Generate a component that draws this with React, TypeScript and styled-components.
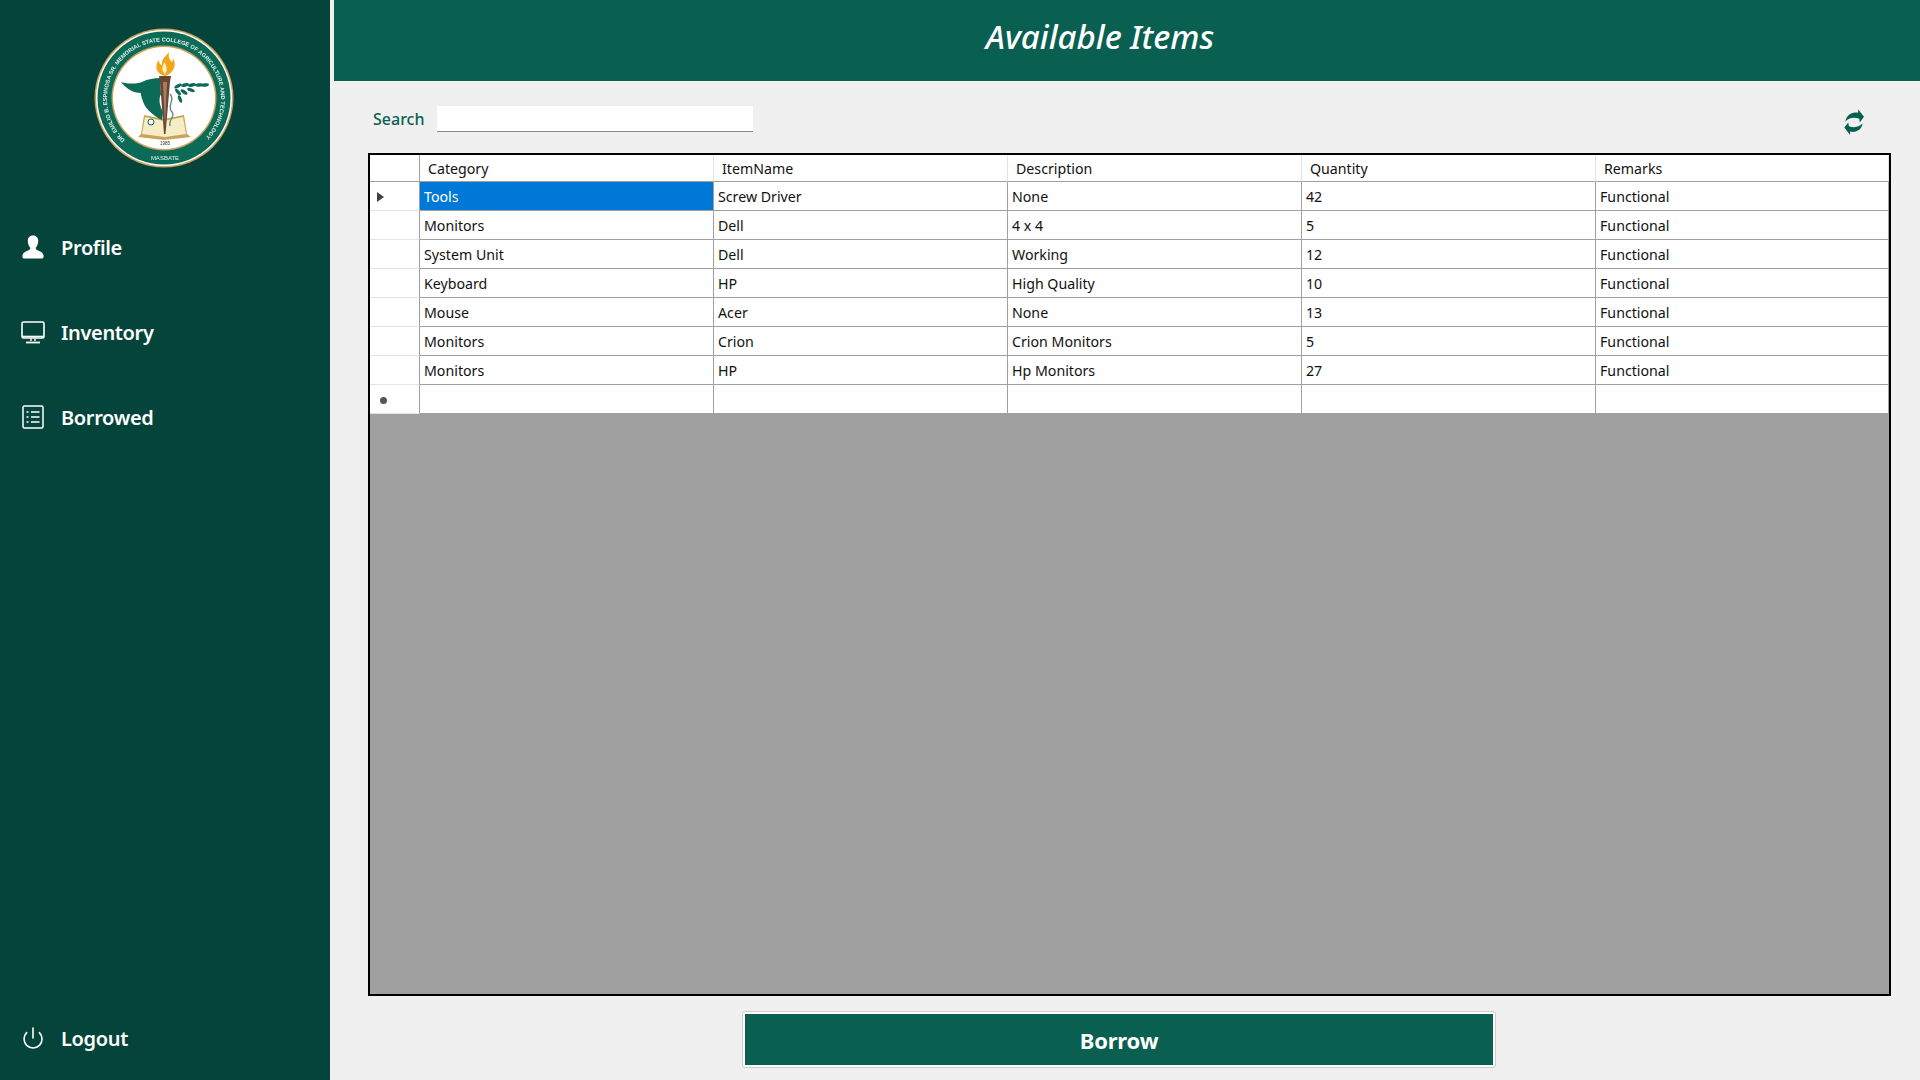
import { FC } from "react";
import styled, { createGlobalStyle } from "styled-components";
import { Power } from "lucide-react";

const GlobalStyle = createGlobalStyle`
html, body {
    margin: 0;
    padding: 0;
    background: #f0f0f0;
}
* {
    box-sizing: border-box;
}
`;

const Page = styled.div`
width: 100%;
height: 100vh;
display: flex;
overflow: hidden;
background: #f0f0f0;
font-family: "Noto Sans", "Open Sans", sans-serif;
`;

const SideBar = styled.aside`
width: 330px;
flex-shrink: 0;
display: flex;
flex-direction: column;
background: #05443a;
padding-bottom: 28px;
`;

const LogoWrap = styled.div`
height: 233px;
padding: 28px 0 0 94px;
svg {
    display: block;
    filter: blur(0.35px);
}
`;

const NavList = styled.nav`
display: flex;
flex-direction: column;
gap: 57px;
`;

const NavItem = styled.div<{ $bottom?: boolean }>`
height: 28px;
display: flex;
align-items: center;
gap: 16px;
padding-left: 21px;
color: #fff;
font-size: 20px;
font-weight: 600;
margin-top: ${(p) => (p.$bottom ? "auto" : "0")};
letter-spacing: -0.35px;
`;

const IconSlot = styled.span`
width: 24px;
height: 24px;
display: flex;
align-items: center;
justify-content: center;
`;

const Main = styled.main`
flex: 1;
margin-left: 4px;
display: flex;
flex-direction: column;
min-width: 0;
`;

const Header = styled.header`
height: 81px;
flex-shrink: 0;
display: flex;
align-items: center;
justify-content: center;
padding-right: 54px;
background: #0a6050;
`;

const Title = styled.h1`
margin: 0 0 8px;
color: #fff;
font-size: 33px;
font-weight: 500;
font-style: italic;
font-family: "Noto Sans", sans-serif;
`;

const Toolbar = styled.div`
height: 72px;
flex-shrink: 0;
display: flex;
align-items: center;
padding: 0 54px 0 39px;
`;

const SearchLabel = styled.label`
color: #0a6050;
font-size: 16px;
font-weight: 500;
margin-right: 13px;
margin-top: 3px;
`;

const SearchInput = styled.input`
width: 316px;
height: 26px;
margin-top: 4px;
background: #fff;
border: none;
border-bottom: 1px solid #8a8a8a;
outline: none;
`;

const RefreshBtn = styled.button`
margin-left: auto;
margin-top: 9px;
width: 23px;
height: 28px;
padding: 0;
border: none;
background: transparent;
svg {
    display: block;
}
`;

const GridBox = styled.div`
height: 843px;
flex-shrink: 0;
margin: 0 29px 0 34px;
border: 2px solid #000;
background: #a0a0a0;
color: #111;
font-size: 14.2px;
`;

const GridRow = styled.div`
display: grid;
grid-template-columns: 50px repeat(4, 294px) 293px;
height: 29px;
`;

const HeadRow = styled(GridRow)`
height: 27px;
`;

const RowHead = styled.div<{ $head?: boolean }>`
background: #fff;
display: flex;
align-items: center;
padding-left: 7px;
border-right: 1px solid #a0a0a0;
border-bottom: 1px solid ${(p) => (p.$head ? "#a0a0a0" : "#e3e3e3")};
`;

const HeadCell = styled.div`
background: #fff;
display: flex;
align-items: center;
padding-left: 8px;
border-right: 1px solid #e3e3e3;
border-bottom: 1px solid #a0a0a0;
`;

const Cell = styled.div<{ $selected?: boolean }>`
display: flex;
align-items: center;
padding-left: 4px;
background: ${(p) => (p.$selected ? "#0078d7" : "#fff")};
color: ${(p) => (p.$selected ? "#fff" : "#111")};
border-right: 1px solid #a0a0a0;
border-bottom: 1px solid #a0a0a0;
`;

const Arrow = styled.span`
width: 0;
height: 0;
margin-top: 1px;
border-top: 5px solid transparent;
border-bottom: 5px solid transparent;
border-left: 7px solid #404040;
`;

const NewMark = styled.span`
width: 7px;
height: 7px;
margin: 3px 0 0 3px;
border-radius: 50%;
background: #555;
`;

const Footer = styled.div`
display: flex;
justify-content: center;
padding: 16px 16px 0 0;
`;

const BorrowBtn = styled.button`
width: 752px;
height: 55px;
background: #0a6050;
border: 2px solid #fff;
outline: 1px solid #cfcfcf;
border-radius: 2px;
color: #fff;
font-family: "Noto Sans", sans-serif;
font-size: 22px;
font-weight: 700;
letter-spacing: -0.2px;
padding: 0;
`;

const columns = ["Category", "ItemName", "Description", "Quantity", "Remarks"];

const items = [
    ["Tools", "Screw Driver", "None", "42", "Functional"],
    ["Monitors", "Dell", "4 x 4", "5", "Functional"],
    ["System Unit", "Dell", "Working", "12", "Functional"],
    ["Keyboard", "HP", "High Quality", "10", "Functional"],
    ["Mouse", "Acer", "None", "13", "Functional"],
    ["Monitors", "Crion", "Crion Monitors", "5", "Functional"],
    ["Monitors", "HP", "Hp Monitors", "27", "Functional"],
];

const leaves = [
    [84, 58, -30], [91, 57, -15], [98, 57, -10], [105, 57, -5], [111, 57, -8],
    [84, 64, 50], [90, 64, 35], [97, 62, 20], [86, 71, 70],
];

const Logo: FC = () => (
    <svg width="140" height="140" viewBox="0 0 140 140">
        <circle cx="70" cy="70" r="69.5" fill="#c9a35b" />
        <circle cx="70" cy="70" r="68" fill="#fff" />
        <circle cx="70" cy="70" r="66.5" fill="#0b6b57" />
        <circle cx="70" cy="70" r="52.5" fill="#c9a35b" />
        <circle cx="70" cy="70" r="51" fill="#fff" />
        <defs>
            <path id="seal-arc" d="M31 112 A57 57 0 1 1 109 112" />
        </defs>
        <text fill="#e8f2ee" fontFamily="Liberation Sans, sans-serif" fontSize="5.6" fontWeight="700">
            <textPath href="#seal-arc" textLength="268" lengthAdjust="spacing">
                DR. EMILIO B. ESPINOSA SR. MEMORIAL STATE COLLEGE OF AGRICULTURE AND TECHNOLOGY
            </textPath>
        </text>
        <text x="71" y="132" textAnchor="middle" fill="#e8f2ee" fontFamily="Liberation Sans, sans-serif" fontSize="6">MASBATE</text>
        <text x="71" y="117" textAnchor="middle" fill="#333" fontFamily="Liberation Sans, sans-serif" fontSize="4.6">1985</text>
        {/* book */}
        <path d="M50 87 L70 91 L90 87 L93 106 L97 109 L70 112 L44 109 L47 106 Z" fill="#c9a35b" />
        <path d="M51 89 L70 93 L89 89 L92 106 L71 109 L48 106 Z" fill="#f6ecc6" />
        {/* bull head */}
        <path d="M27 54 C34 56 42 56 48 54 C54 51 60 50 66 50 L67 66 C64 72 66 78 69 84 L68 92 C60 88 53 82 50 76 C48 71 47 68 46.7 65 C41 65 33 62 27 54 Z" fill="#0b6b57" />
        {/* leaves and staff */}
        {leaves.map(([x, y, r]) => (
            <ellipse key={`${x}-${y}`} cx={x} cy={y} rx="4" ry="1.7" transform={`rotate(${r} ${x} ${y})`} fill="#0b6b57" />
        ))}
        <path d="M76 66 C82 72 72 78 78 84 C82 88 74 92 76 98" fill="none" stroke="#5f8f82" strokeWidth="1.4" />
        <circle cx="57" cy="94" r="3" fill="#fff" stroke="#0b6b57" strokeWidth="1" />
        {/* torch */}
        <path d="M65 48 H77 L76 54 L71.5 106 H70 L66 54 Z" fill="#6b4630" />
        <path d="M69 54 H73 L71 98 Z" fill="#a77f63" />
        {/* flame */}
        <path d="M71 48 C62 46 60 38 65 32 C65 36 67 37 68 37 C67 31 72 28 75 24 C74 30 76 32 78 34 C79 32 79 31 79 30 C83 37 80 45 71 48 Z" fill="#f2a71b" />
        <path d="M71 46 C67 42 68 38 71 34 C71 38 75 40 71 46 Z" fill="#fff3c4" />
    </svg>
);

const UserIcon: FC = () => (
    <svg width="22" height="24" viewBox="0 0 22 24" fill="#fff">
        <path d="M11 0.5 C14.6 0.5 16.4 3.2 16.2 6.4 C16 9.4 14.8 11.4 13.8 12.8 C13.4 14 14.4 15 16.6 15.8 C19.8 17 21.6 18.6 21.6 21.4 C21.6 23 20.6 23.6 19 23.6 H3 C1.4 23.6 0.4 23 0.4 21.4 C0.4 18.6 2.2 17 5.4 15.8 C7.6 15 8.6 14 8.2 12.8 C7.2 11.4 6 9.4 5.8 6.4 C5.6 3.2 7.4 0.5 11 0.5 Z" />
    </svg>
);

const MonitorIcon: FC = () => (
    <svg width="24" height="23" viewBox="0 0 24 23" fill="none" stroke="#fff">
        <rect x="1" y="1" width="22" height="16" rx="1.5" strokeWidth="1.6" />
        <path d="M1 15.5 H23" strokeWidth="1.6" />
        <path d="M10 17.5 V20 M14 17.5 V20" strokeWidth="1.4" />
        <path d="M5 21.5 H19" strokeWidth="1.8" />
    </svg>
);

const ListIcon: FC = () => (
    <svg width="22" height="24" viewBox="0 0 22 24" fill="none" stroke="#fff">
        <rect x="1" y="1" width="20" height="22" rx="1.5" strokeWidth="1.5" />
        <path d="M9 7 H17.5 M9 12 H17.5 M9 17 H17.5" strokeWidth="1.5" />
        <path d="M4.5 7 H6.5 M4.5 12 H6.5 M4.5 17 H6.5" strokeWidth="1.5" />
    </svg>
);

const RefreshIcon: FC = () => (
    <svg width="23" height="28" viewBox="0 0 23 28" fill="#0a6050">
        <path d="M2.4 13.4 C3.4 7 9 3.2 15 4.8 L15.3 1.5 L21 8.7 L16.8 14.4 L16.3 10.8 C11 9 6.5 9.5 2.4 13.4 Z" />
        <path d="M19.6 15.6 C18.6 22 13 25 7.2 23.6 L7 27 L1.4 19.6 L5.2 14.6 L6 18.2 C11 20 15.5 19.4 19.6 15.6 Z" />
    </svg>
);

const App: FC = () => {
    return (
        <Page>
            <GlobalStyle />
            <SideBar>
                <LogoWrap>
                    <Logo />
                </LogoWrap>
                <NavList>
                    <NavItem><IconSlot><UserIcon /></IconSlot>Profile</NavItem>
                    <NavItem><IconSlot><MonitorIcon /></IconSlot>Inventory</NavItem>
                    <NavItem><IconSlot><ListIcon /></IconSlot>Borrowed</NavItem>
                </NavList>
                <NavItem $bottom><IconSlot><Power size={24} color="#fff" strokeWidth={1.6} /></IconSlot>Logout</NavItem>
            </SideBar>
            <Main>
                <Header>
                    <Title>Available Items</Title>
                </Header>
                <Toolbar>
                    <SearchLabel>Search</SearchLabel>
                    <SearchInput />
                    <RefreshBtn><RefreshIcon /></RefreshBtn>
                </Toolbar>
                <GridBox>
                    <HeadRow>
                        <RowHead $head />
                        {columns.map((c) => (
                            <HeadCell key={c}>{c}</HeadCell>
                        ))}
                    </HeadRow>
                    {items.map((row, i) => (
                        <GridRow key={i}>
                            <RowHead>{i === 0 && <Arrow />}</RowHead>
                            {row.map((v, j) => (
                                <Cell key={j} $selected={i === 0 && j === 0}>{v}</Cell>
                            ))}
                        </GridRow>
                    ))}
                    <GridRow>
                        <RowHead><NewMark /></RowHead>
                        {columns.map((c) => (
                            <Cell key={c} />
                        ))}
                    </GridRow>
                </GridBox>
                <Footer>
                    <BorrowBtn>Borrow</BorrowBtn>
                </Footer>
            </Main>
        </Page>
    );
};

export default App;
